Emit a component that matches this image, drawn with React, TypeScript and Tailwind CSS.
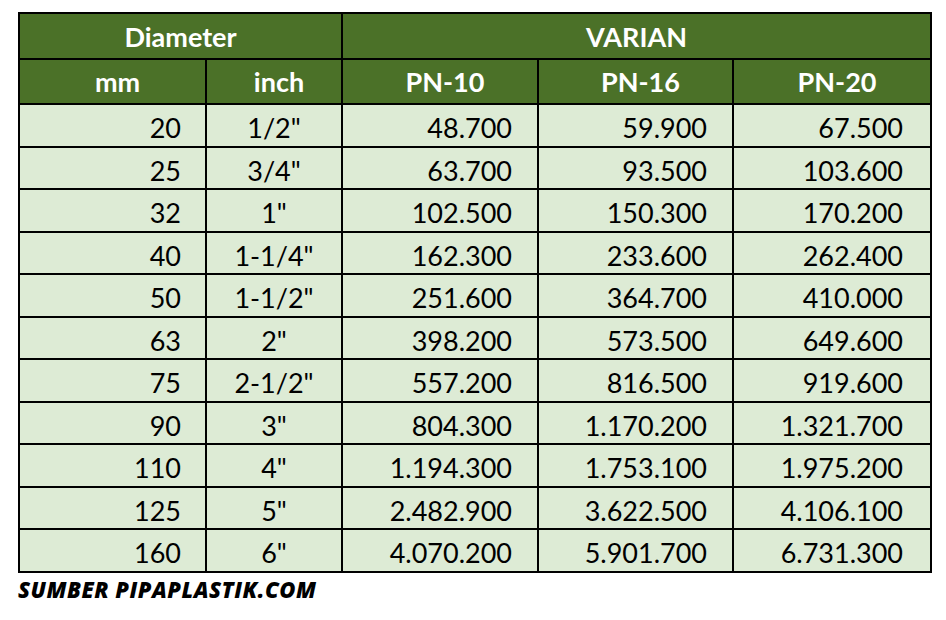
const rows: [string, string, string, string, string][] = [
  ['20', '1/2"', '48.700', '59.900', '67.500'],
  ['25', '3/4"', '63.700', '93.500', '103.600'],
  ['32', '1"', '102.500', '150.300', '170.200'],
  ['40', '1-1/4"', '162.300', '233.600', '262.400'],
  ['50', '1-1/2"', '251.600', '364.700', '410.000'],
  ['63', '2"', '398.200', '573.500', '649.600'],
  ['75', '2-1/2"', '557.200', '816.500', '919.600'],
  ['90', '3"', '804.300', '1.170.200', '1.321.700'],
  ['110', '4"', '1.194.300', '1.753.100', '1.975.200'],
  ['125', '5"', '2.482.900', '3.622.500', '4.106.100'],
  ['160', '6"', '4.070.200', '5.901.700', '6.731.300'],
]

export default function App() {
  return (
    <div className="w-[946px] h-[620px] bg-white font-['Lato',sans-serif] text-black">
      <div className="pt-[12px] pl-[18px]">
        <table className="table-fixed w-[912px] border-collapse border-[2px] border-black">
          <colgroup>
            <col className="w-[187px]" />
            <col className="w-[136px]" />
            <col className="w-[196px]" />
            <col className="w-[195px]" />
            <col className="w-[198px]" />
          </colgroup>
          <thead className="bg-[#4b7128] text-white font-bold text-[27px]">
            <tr className="h-[46px]">
              <th colSpan={2} className="border-[2px] border-black leading-none">
                Diameter
              </th>
              <th colSpan={3} className="border-[2px] border-black leading-none">
                VARIAN
              </th>
            </tr>
            <tr className="h-[45px]">
              {['mm', 'inch', 'PN-10', 'PN-16', 'PN-20'].map((h) => (
                <th key={h} className="border-[2px] border-black pl-[10px] leading-none">
                  {h}
                </th>
              ))}
            </tr>
          </thead>
          <tbody className="bg-[#ddebd5] text-[27px]">
            {rows.map((r) => (
              <tr key={r[0]} className="h-[42.5px]">
                <td className="border-[2px] border-black text-right pr-[24px] pt-[5px] leading-none">{r[0]}</td>
                <td className="border-[2px] border-black text-center pt-[5px] leading-none">{r[1]}</td>
                <td className="border-[2px] border-black text-right pr-[25px] pt-[5px] leading-none">{r[2]}</td>
                <td className="border-[2px] border-black text-right pr-[25px] pt-[5px] leading-none">{r[3]}</td>
                <td className="border-[2px] border-black text-right pr-[27px] pt-[5px] leading-none">{r[4]}</td>
              </tr>
            ))}
          </tbody>
        </table>
        <div className="mt-[5px] font-['Open_Sans',sans-serif] text-[22px] font-extrabold italic leading-none tracking-[0.5px]">
          SUMBER PIPAPLASTIK.COM
        </div>
      </div>
    </div>
  )
}
